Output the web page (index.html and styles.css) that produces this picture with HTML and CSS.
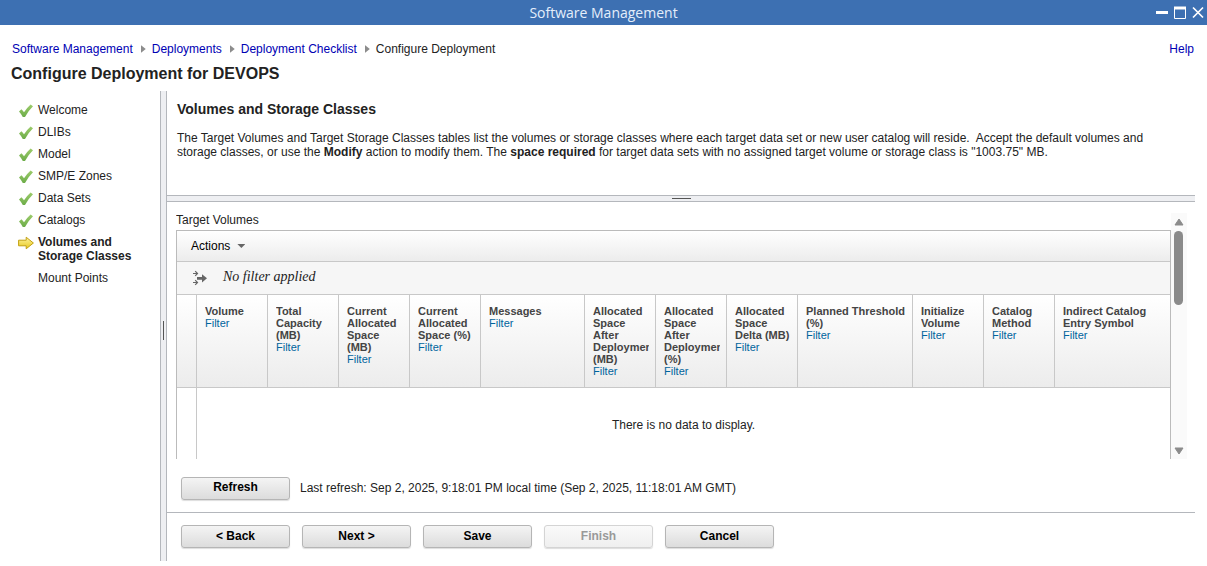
FILE: index.html
```html
<!DOCTYPE html>
<html lang="en">
<head>
<meta charset="utf-8">
<title>Software Management</title>
<link rel="stylesheet" href="styles.css">
</head>
<body>
<svg class="defs" aria-hidden="true">
  <defs>
    <linearGradient id="green" x1="0" y1="0" x2="0" y2="1"><stop offset="0" stop-color="#9dcc6c"/><stop offset="1" stop-color="#6cac48"/></linearGradient>
    <linearGradient id="gold" x1="0" y1="0" x2="0" y2="1"><stop offset="0" stop-color="#fdf3a0"/><stop offset="1" stop-color="#e8c81c"/></linearGradient>
    <symbol id="check" viewBox="0 0 16 16"><path d="M1 8.4 3.4 6.3Q5 7.8 6 9.2 8.6 5 12.6 1.4L15 3.2Q10 8 7 14H4.8Q3.2 10.8 1 8.4Z" fill="url(#green)"/></symbol>
  </defs>
</svg>
<div class="window">
  <header class="titlebar">
    <span class="titlebar-text">Software Management</span>
    <div class="window-controls">
      <button type="button" aria-label="Minimize"><svg width="14" height="14" viewBox="0 0 14 14"><path d="M1 6.5h12" stroke="#fff" stroke-width="3"/></svg></button>
      <button type="button" aria-label="Maximize"><svg width="14" height="14" viewBox="0 0 14 14"><path d="M1.5 1v11.5h11V1" fill="none" stroke="#fff"/><path d="M1 2h12" stroke="#fff" stroke-width="3"/></svg></button>
      <button type="button" aria-label="Close"><svg width="14" height="14" viewBox="0 0 14 14"><path d="M2 1.5l10 10M12 1.5l-10 10" stroke="#fff" stroke-width="1.7"/></svg></button>
    </div>
  </header>
  <div class="crumb-row">
    <nav class="crumbs" aria-label="Breadcrumb">
      <a href="#">Software Management</a><i class="sep"></i>
      <a href="#">Deployments</a><i class="sep"></i>
      <a href="#">Deployment Checklist</a><i class="sep"></i>
      <span>Configure Deployment</span>
    </nav>
    <a href="#">Help</a>
  </div>
  <h1>Configure Deployment for DEVOPS</h1>
  <div class="body">
    <ol class="steps">
      <li><svg><use href="#check"/></svg><span>Welcome</span></li>
      <li><svg><use href="#check"/></svg><span>DLIBs</span></li>
      <li><svg><use href="#check"/></svg><span>Model</span></li>
      <li><svg><use href="#check"/></svg><span>SMP/E Zones</span></li>
      <li><svg><use href="#check"/></svg><span>Data Sets</span></li>
      <li><svg><use href="#check"/></svg><span>Catalogs</span></li>
      <li class="current" aria-current="step"><svg viewBox="0 0 16 16"><path d="M.6 5.2h7.6V2.2L15.4 8 8.2 13.8v-3H.6Z" fill="url(#gold)" stroke="#c2a010" stroke-width="1" stroke-linejoin="round"/></svg><span>Volumes and Storage Classes</span></li>
      <li><i class="no-icon"></i><span>Mount Points</span></li>
    </ol>
    <div class="vsplit"><i></i></div>
    <main>
      <section class="intro">
        <h2>Volumes and Storage Classes</h2>
        <p>The Target Volumes and Target Storage Classes tables list the volumes or storage classes where each target data set or new user catalog will reside.&nbsp; Accept the default volumes and storage classes, or use the <b>Modify</b> action to modify them. The <b>space required</b> for target data sets with no assigned target volume or storage class is "1003.75" MB.</p>
      </section>
      <div class="hsplit"><i></i></div>
      <section class="tables">
        <div class="viewport">
          <div class="table-title" id="tv">Target Volumes</div>
          <div class="grid">
            <div class="toolbar"><button type="button" class="menu">Actions<i></i></button></div>
            <div class="filterbar">
              <svg width="16" height="16" viewBox="0 0 16 16"><g fill="none" stroke="#666" stroke-width="1.2"><path d="M1 3.5h4M3.2 1.2l2.3 2.3-2.3 2.3"/><path d="M1 12.5h4M3.2 10.2l2.3 2.3-2.3 2.3"/></g><path d="M5 7h5V4.2L15 8.3l-5 4.1V9.8H5Z" fill="#666"/></svg>
              <em>No filter applied</em>
            </div>
            <table aria-labelledby="tv">
              <colgroup><col class="c-sel"><col><col><col><col><col class="c-msg"><col><col><col><col class="c-thr"><col><col><col class="c-last"></colgroup>
              <thead>
                <tr>
                  <td></td>
                  <th scope="col"><div>Volume<a href="#">Filter</a></div></th>
                  <th scope="col"><div>Total Capacity (MB)<a href="#">Filter</a></div></th>
                  <th scope="col"><div>Current Allocated Space (MB)<a href="#">Filter</a></div></th>
                  <th scope="col"><div>Current Allocated Space (%)<a href="#">Filter</a></div></th>
                  <th scope="col"><div>Messages<a href="#">Filter</a></div></th>
                  <th scope="col"><div>Allocated Space After Deployment (MB)<a href="#">Filter</a></div></th>
                  <th scope="col"><div>Allocated Space After Deployment (%)<a href="#">Filter</a></div></th>
                  <th scope="col"><div>Allocated Space Delta (MB)<a href="#">Filter</a></div></th>
                  <th scope="col"><div>Planned Threshold (%)<a href="#">Filter</a></div></th>
                  <th scope="col"><div>Initialize Volume<a href="#">Filter</a></div></th>
                  <th scope="col"><div>Catalog Method<a href="#">Filter</a></div></th>
                  <th scope="col"><div>Indirect Catalog Entry Symbol<a href="#">Filter</a></div></th>
                </tr>
              </thead>
              <tbody><tr><td></td><td class="empty" colspan="12">There is no data to display.</td></tr></tbody>
            </table>
          </div>
        </div>
        <div class="scrollbar" aria-hidden="true">
          <svg width="10" height="8" viewBox="0 0 10 8"><path d="M5 1 9 7H1Z" fill="#8b8b8b" stroke="#8b8b8b" stroke-linejoin="round"/></svg>
          <div class="track"><div class="thumb"></div></div>
          <svg width="10" height="8" viewBox="0 0 10 8"><path d="M5 7 9 1H1Z" fill="#8b8b8b" stroke="#8b8b8b" stroke-linejoin="round"/></svg>
        </div>
      </section>
      <div class="refresh-row">
        <button type="button" class="btn">Refresh</button>
        <span>Last refresh: Sep 2, 2025, 9:18:01 PM local time (Sep 2, 2025, 11:18:01 AM GMT)</span>
      </div>
      <footer class="actions">
        <button type="button" class="btn">&lt; Back</button>
        <button type="button" class="btn">Next &gt;</button>
        <button type="button" class="btn">Save</button>
        <button type="button" class="btn" disabled>Finish</button>
        <button type="button" class="btn">Cancel</button>
      </footer>
    </main>
  </div>
</div>
</body>
</html>
```
FILE: styles.css
```css
* { box-sizing: border-box; }
body { margin: 0; background: #fff; color: #222; font: 12px/14px "Liberation Sans", Arial, sans-serif; }
a { color: #0000b4; text-decoration: none; }
button { font: inherit; cursor: pointer; }
.defs { position: absolute; width: 0; height: 0; }

.window { display: flex; flex-direction: column; height: 100vh; min-height: 540px; padding-bottom: 5px; }

.titlebar { display: grid; grid-template-columns: 1fr auto 1fr; align-items: center; height: 25px; background: #3d70b2; color: #e4eefb; }
.titlebar-text { grid-column: 2; font: 14px/25px "Open Sans", sans-serif; }
.window-controls { display: flex; justify-content: flex-end; gap: 4px; padding-right: 2px; }
.window-controls button { display: flex; padding: 0; border: 0; background: none; }

.crumb-row { display: flex; justify-content: space-between; padding: 17px 13px 0 12px; }
.crumbs { display: flex; align-items: center; }
.sep { width: 5px; height: 8px; margin: 0 6px 0 8px; background: #8c8c8c; clip-path: polygon(0 0, 100% 50%, 0 100%); }
h1 { margin: 8px 11px; font-size: 16px; line-height: 19px; }

.body { flex: 1; display: flex; min-height: 0; padding-right: 12px; }
.steps { width: 160px; margin: 0; padding: 12px 12px 0 18px; list-style: none; }
.steps li { display: flex; gap: 4px; margin-bottom: 8px; }
.steps svg, .no-icon { flex: none; width: 16px; height: 16px; margin-bottom: -2px; }
.current { font-weight: bold; }
.vsplit { display: flex; align-items: center; justify-content: center; width: 7px; padding-top: 8px; border: solid #b4b7bc; border-width: 0 1px; background: #eeeff2; }
.vsplit i { width: 1px; height: 19px; background: #555; }

main { flex: 1; min-width: 0; display: flex; flex-direction: column; }
.intro { height: 104px; padding: 10px 24px 0 10px; }
h2 { margin: 0 0 14px; font-size: 14px; line-height: 16px; }
p { margin: 0; }
.hsplit { display: flex; align-items: center; justify-content: center; height: 7px; border: solid #b4b7bc; border-width: 1px 0; background: #eeeff2; }
.hsplit i { width: 19px; height: 1px; background: #555; }

.tables { flex: 1; min-height: 0; display: flex; padding: 11px 8px 0 9px; }
.viewport { flex: 1; min-width: 0; overflow: hidden; }
.table-title { height: 17px; }
.grid { border: 1px solid #bbb; border-bottom: 0; }
.toolbar { display: flex; align-items: center; height: 31px; padding-left: 14px; border-bottom: 1px solid #c8c8c8; background: linear-gradient(#fff, #ececec); }
.menu { display: flex; align-items: center; gap: 7px; padding: 0; border: 0; background: none; color: #000; }
.menu i { width: 8px; height: 4px; background: #666; clip-path: polygon(0 0, 100% 0, 50% 100%); }
.filterbar { display: flex; align-items: center; gap: 15px; height: 32px; padding-left: 15px; background: #f6f6f6; }
.filterbar em { font: italic 14px/16px "Liberation Serif", serif; padding-bottom: 3px; }

table { width: 100%; table-layout: fixed; border-collapse: separate; border-spacing: 0; }
col { width: 71px; }
.c-sel { width: 20px; }
.c-msg { width: 104px; }
.c-thr { width: 115px; }
.c-last { width: auto; }
thead td, th { height: 94px; border: solid #c8c8c8; border-width: 1px 1px 1px 0; background: linear-gradient(#fff, #ececec); }
th { padding: 10px 6px 0 8px; vertical-align: top; text-align: left; color: #444; font-size: 11px; line-height: 12px; }
th:last-child { border-right: 0; }
th div { overflow: hidden; }
th a { display: block; color: #00649d; font-weight: normal; }
tbody td { height: 100px; padding: 0; border-right: 1px solid #c8c8c8; }
tbody .empty { padding-top: 30px; border: 0; vertical-align: top; text-align: center; }

.scrollbar { flex: none; display: flex; flex-direction: column; align-items: center; gap: 5px; width: 16px; padding: 5px 1px 4px 0; background: #fafafa; }
.track { flex: 1; width: 9px; }
.thumb { height: 35%; border-radius: 5px; background: #8b8b8b; }

.refresh-row { display: flex; align-items: center; gap: 10px; height: 53px; padding: 5px 0 0 14px; }
.actions { display: flex; gap: 12px; padding: 12px 14px 13px; border-top: 1px solid #b4b7bc; }
.btn { width: 109px; height: 23px; padding: 0 0 2px; border: 1px solid #b5b5b5; border-radius: 3px; background: linear-gradient(#f4f4f4, #dcdcdc); box-shadow: 0 1px 1px #ddd; color: #000; font-weight: bold; }
.btn:disabled { border-color: #d4d4d4; background: linear-gradient(#fafafa, #efefef); color: #999; cursor: default; }
```
